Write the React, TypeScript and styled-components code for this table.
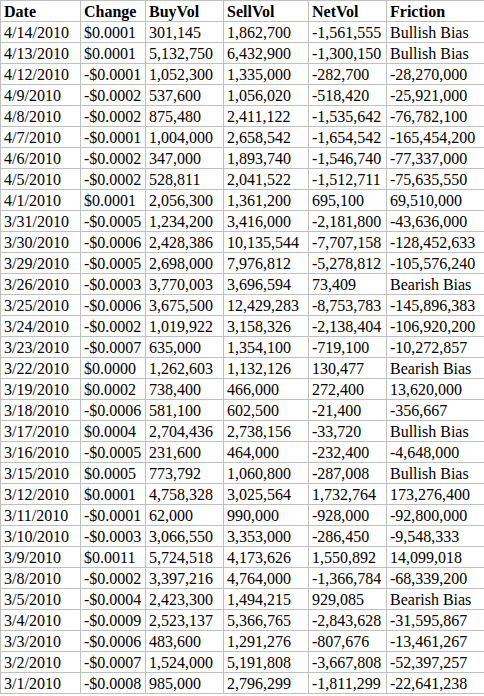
import React from "react";
import styled, { createGlobalStyle } from "styled-components";

const Global = createGlobalStyle`
  html, body { margin: 0; padding: 0; background: #ffffff; }
  body { font-family: "Liberation Serif", "Times New Roman", serif; }
`;

const Table = styled.table`
  border-collapse: collapse;
  table-layout: fixed;
  width: 484px;
  font-family: "Liberation Serif", "Times New Roman", serif;
  font-size: 16px;
  color: #000000;
  background: #ffffff;
`;

const HeadCell = styled.th`
  border: 1px solid #c0c0c0;
  height: 20px;
  padding: 0 0 0 3px;
  text-align: left;
  font-weight: bold;
  white-space: nowrap;
  overflow: hidden;
  vertical-align: bottom;
  line-height: 18px;
`;

const Cell = styled.td`
  border: 1px solid #c0c0c0;
  height: 20px;
  padding: 0 0 0 3px;
  text-align: left;
  white-space: nowrap;
  overflow: hidden;
  vertical-align: bottom;
  line-height: 18px;
`;

const widths = [80, 65, 78, 85, 78, 98];
const headers = ["Date", "Change", "BuyVol", "SellVol", "NetVol", "Friction"];

const rows: string[][] = [
  ["4/14/2010", "$0.0001", "301,145", "1,862,700", "-1,561,555", "Bullish Bias"],
  ["4/13/2010", "$0.0001", "5,132,750", "6,432,900", "-1,300,150", "Bullish Bias"],
  ["4/12/2010", "-$0.0001", "1,052,300", "1,335,000", "-282,700", "-28,270,000"],
  ["4/9/2010", "-$0.0002", "537,600", "1,056,020", "-518,420", "-25,921,000"],
  ["4/8/2010", "-$0.0002", "875,480", "2,411,122", "-1,535,642", "-76,782,100"],
  ["4/7/2010", "-$0.0001", "1,004,000", "2,658,542", "-1,654,542", "-165,454,200"],
  ["4/6/2010", "-$0.0002", "347,000", "1,893,740", "-1,546,740", "-77,337,000"],
  ["4/5/2010", "-$0.0002", "528,811", "2,041,522", "-1,512,711", "-75,635,550"],
  ["4/1/2010", "$0.0001", "2,056,300", "1,361,200", "695,100", "69,510,000"],
  ["3/31/2010", "-$0.0005", "1,234,200", "3,416,000", "-2,181,800", "-43,636,000"],
  ["3/30/2010", "-$0.0006", "2,428,386", "10,135,544", "-7,707,158", "-128,452,633"],
  ["3/29/2010", "-$0.0005", "2,698,000", "7,976,812", "-5,278,812", "-105,576,240"],
  ["3/26/2010", "-$0.0003", "3,770,003", "3,696,594", "73,409", "Bearish Bias"],
  ["3/25/2010", "-$0.0006", "3,675,500", "12,429,283", "-8,753,783", "-145,896,383"],
  ["3/24/2010", "-$0.0002", "1,019,922", "3,158,326", "-2,138,404", "-106,920,200"],
  ["3/23/2010", "-$0.0007", "635,000", "1,354,100", "-719,100", "-10,272,857"],
  ["3/22/2010", "$0.0000", "1,262,603", "1,132,126", "130,477", "Bearish Bias"],
  ["3/19/2010", "$0.0002", "738,400", "466,000", "272,400", "13,620,000"],
  ["3/18/2010", "-$0.0006", "581,100", "602,500", "-21,400", "-356,667"],
  ["3/17/2010", "$0.0004", "2,704,436", "2,738,156", "-33,720", "Bullish Bias"],
  ["3/16/2010", "-$0.0005", "231,600", "464,000", "-232,400", "-4,648,000"],
  ["3/15/2010", "$0.0005", "773,792", "1,060,800", "-287,008", "Bullish Bias"],
  ["3/12/2010", "$0.0001", "4,758,328", "3,025,564", "1,732,764", "173,276,400"],
  ["3/11/2010", "-$0.0001", "62,000", "990,000", "-928,000", "-92,800,000"],
  ["3/10/2010", "-$0.0003", "3,066,550", "3,353,000", "-286,450", "-9,548,333"],
  ["3/9/2010", "$0.0011", "5,724,518", "4,173,626", "1,550,892", "14,099,018"],
  ["3/8/2010", "-$0.0002", "3,397,216", "4,764,000", "-1,366,784", "-68,339,200"],
  ["3/5/2010", "-$0.0004", "2,423,300", "1,494,215", "929,085", "Bearish Bias"],
  ["3/4/2010", "-$0.0009", "2,523,137", "5,366,765", "-2,843,628", "-31,595,867"],
  ["3/3/2010", "-$0.0006", "483,600", "1,291,276", "-807,676", "-13,461,267"],
  ["3/2/2010", "-$0.0007", "1,524,000", "5,191,808", "-3,667,808", "-52,397,257"],
  ["3/1/2010", "-$0.0008", "985,000", "2,796,299", "-1,811,299", "-22,641,238"],
];

export default function App() {
  return (
    <>
      <Global />
      <Table>
        <colgroup>
          {widths.map((w, i) => (
            <col key={i} style={{ width: w }} />
          ))}
        </colgroup>
        <thead>
          <tr>
            {headers.map((h) => (
              <HeadCell key={h}>{h}</HeadCell>
            ))}
          </tr>
        </thead>
        <tbody>
          {rows.map((r) => (
            <tr key={r[0]}>
              {r.map((c, i) => (
                <Cell key={i}>{c}</Cell>
              ))}
            </tr>
          ))}
        </tbody>
      </Table>
    </>
  );
}
